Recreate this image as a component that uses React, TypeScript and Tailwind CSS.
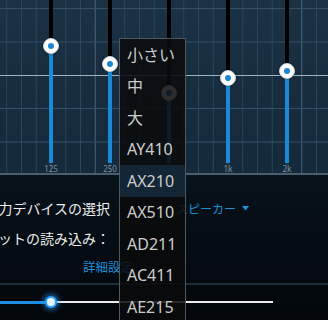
import React from "react";

const sliders = [
  { x: -8, y: 52, label: "" },
  { x: 51, y: 46, label: "125" },
  { x: 110, y: 64, label: "250" },
  { x: 169, y: 93, label: "500" },
  { x: 228, y: 78, label: "1k" },
  { x: 287, y: 71, label: "2k" },
];

const menuItems = ["小さい", "中", "大", "AY410", "AX210", "AX510", "AD211", "AC411", "AE215"];

function Grid() {
  const vs: number[] = [];
  for (let k = -3; k <= 19; k++) vs.push(51 + k * 14.75);
  const hs = [8.5, 42, 108.5, 142];
  return (
    <svg className="absolute inset-0" width="328" height="175" viewBox="0 0 328 175">
      {vs.map((x, i) => (
        <line
          key={"v" + i}
          x1={x}
          x2={x}
          y1={0}
          y2={175}
          stroke={Math.abs(x - 95.25) < 1 || Math.abs(x - 301.75) < 1 ? "#4a6578" : "#2c4557"}
          strokeWidth={1}
        />
      ))}
      {hs.map((y, i) => (
        <line key={"h" + i} x1={0} x2={328} y1={y} y2={y} stroke="#36506a" strokeWidth={1.2} />
      ))}
      <line x1={0} x2={328} y1={75.5} y2={75.5} stroke="#9fb3c0" strokeWidth={1.2} />
    </svg>
  );
}

function Thumb() {
  return (
    <div className="relative flex h-4 w-4 shrink-0 items-center justify-center rounded-full border border-[#c9d3da] bg-white shadow-[0_0_2px_rgba(0,0,0,0.5)]">
      <div className="h-[6px] w-[6px] rounded-full bg-[#1886d2]" />
    </div>
  );
}

export default function App() {
  return (
    <div
      className="relative h-[320px] w-[328px] overflow-hidden bg-[#04090e]"
      style={{ fontFamily: '"Noto Sans", "Noto Sans CJK JP", sans-serif' }}
    >
      {/* EQ area */}
      <div className="relative h-[175px] w-full bg-gradient-to-b from-[#1b3244] to-[#14293a]">
        <Grid />
        <div className="relative ml-[-16px] flex h-full gap-[43px]">
          {sliders.map((s, i) => (
            <div key={i} className="flex h-full w-4 shrink-0 flex-col items-center">
              <div className="w-1 shrink-0 bg-black" style={{ height: s.y - 8 }} />
              <Thumb />
              <div className="w-1 shrink-0 bg-[#1a8ad6]" style={{ height: 163 - (s.y + 8) }} />
              <div className="flex h-[12px] items-center whitespace-nowrap text-[8px] leading-none text-[#7f909c]">
                {s.label}
              </div>
            </div>
          ))}
        </div>
        <div className="absolute bottom-0 left-0 h-[2px] w-full bg-[#4a5e6e]" />
      </div>

      {/* Bottom settings area */}
      <div
        className="flex h-[145px] flex-col bg-gradient-to-b from-[#07121b] to-[#03070b] text-[14px] text-[#ececec]"
        style={{ fontFamily: '"Noto Sans CJK JP", sans-serif' }}
      >
        <div className="mt-[19px] flex h-[32px] items-center">
          <div className="flex w-[110px] shrink-0 justify-end whitespace-nowrap">出力デバイスの選択</div>
          <div className="ml-[66px] flex items-center gap-[6px] text-[12px] text-[#1e90da]">
            <span className="whitespace-nowrap">スピーカー</span>
            <svg width="7" height="5" viewBox="0 0 7 5">
              <polygon points="0,0 7,0 3.5,4.5" fill="#1e90da" />
            </svg>
          </div>
        </div>
        <div className="flex h-[32px] items-center">
          <div className="flex w-[110px] shrink-0 justify-end whitespace-nowrap">プリセットの読み込み：</div>
        </div>
        <div className="flex h-[30px] items-center pl-[83px] text-[12.5px] text-[#1e90da]">
          <span className="whitespace-nowrap">詳細設定</span>
        </div>
        <div className="mt-[2px] h-[2px] w-full bg-[#1f303d]" />
        <div className="flex h-[38px] items-center">
          <div className="h-[3px] w-[45px] bg-[#1e8fe0]" />
          <div className="relative flex h-[12px] w-[12px] shrink-0 items-center justify-center rounded-full border-2 border-[#2aa3ff] bg-[#e6f4ff] shadow-[0_0_5px_2px_rgba(40,150,255,0.6)]" />
          <div className="h-[2px] w-[216px] bg-[#ececec]" />
        </div>
      </div>

      {/* Dropdown menu */}
      <div className="absolute left-[119px] top-[38px] z-20 h-[300px] w-[67px] border border-[#52575c] bg-[#0a0b0c]/[0.86]">
        {menuItems.map((m) => (
          <div
            key={m}
            className={
              "flex h-[31.5px] items-center whitespace-nowrap pl-[7px] text-[16px] text-[#cdcdcd] " +
              (m === "AX210" ? "bg-[#132636]" : "")
            }
            style={{ fontFamily: '"Noto Sans", "Noto Sans CJK JP", sans-serif' }}
          >
            {m}
          </div>
        ))}
      </div>
    </div>
  );
}
